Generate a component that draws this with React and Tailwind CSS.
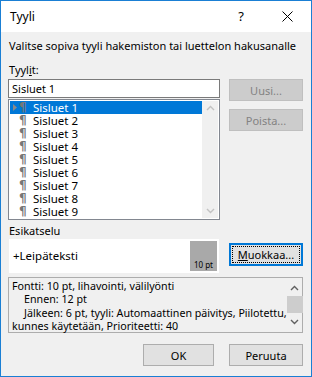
import React from "react";

const font = { fontFamily: '"Noto Sans", "Open Sans", sans-serif' };

function Chevron({ up, color }) {
  return (
    <svg width="9" height="6" viewBox="0 0 9 6" fill="none">
      <path
        d={up ? "M1 5 L4.5 1.5 L8 5" : "M1 1 L4.5 4.5 L8 1"}
        stroke={color}
        strokeWidth="1.4"
      />
    </svg>
  );
}

function Button({ children, disabled, focused, className = "" }) {
  if (focused) {
    return (
      <div className={`flex h-[23px] items-center justify-center border-2 border-[#0078d7] bg-[#e1e1e1] p-px ${className}`}>
        <div className="flex h-full w-full items-center justify-center border border-dotted border-black text-black">
          {children}
        </div>
      </div>
    );
  }
  return (
    <div
      className={`flex h-[22px] items-center justify-center border ${
        disabled ? "border-[#bfbfbf] bg-[#cccccc] text-[#838383]" : "border-[#adadad] bg-[#e1e1e1] text-black"
      } ${className}`}
    >
      {children}
    </div>
  );
}

const styles = ["Sisluet 1", "Sisluet 2", "Sisluet 3", "Sisluet 4", "Sisluet 5", "Sisluet 6", "Sisluet 7", "Sisluet 8", "Sisluet 9"];

export default function App() {
  return (
    <div style={font} className="flex h-[377px] w-[312px] flex-col border border-[#1a7fd4] bg-[#f0f0f0] text-[11px] leading-[15px] whitespace-nowrap text-black">
      {/* title bar */}
      <div className="flex h-[31px] items-center bg-white pl-[9px]">
        <span className="text-[12px]">Tyyli</span>
        <span className="ml-auto mr-[38px] text-[13px]">?</span>
        <svg className="mr-[18px]" width="11" height="11" viewBox="0 0 11 11">
          <path d="M0.5 0.5 L10.5 10.5 M10.5 0.5 L0.5 10.5" stroke="#000" strokeWidth="1" />
        </svg>
      </div>

      <div className="flex flex-1 flex-col px-[7px]">
        <div className="mt-[6px] pl-px">Valitse sopiva tyyli hakemiston tai luettelon hakusanalle</div>
        <div className="mt-[9px] pl-px">
          Tyyl<span className="underline">i</span>t:
        </div>

        <div className="mt-[2px] flex gap-[9px]">
          <div className="flex w-[212px] flex-col">
            <div className="flex h-[19px] items-center border border-[#7a7a7a] bg-white pl-[3px]">Sisluet 1</div>
            <div className="mt-px flex h-[121px] border border-[#828790] bg-white p-px">
              <div className="flex flex-1 flex-col">
                {styles.map((s, i) => (
                  <div
                    key={s}
                    className={`flex h-[13px] items-center overflow-hidden leading-[13px] ${i === 0 ? "bg-[#0078d7] text-white" : ""}`}
                  >
                    <span className="flex w-[7px] justify-end">
                      {i === 0 && (
                        <svg width="4" height="7" viewBox="0 0 4 7">
                          <path d="M0 0 L4 3.5 L0 7 Z" fill="#8a8a8a" />
                        </svg>
                      )}
                    </span>
                    <span
                      className="ml-[2px] flex h-[13px] w-[12px] items-center text-[12px] leading-[13px] font-bold text-[#777777]"
                      style={{ fontFamily: '"DejaVu Sans", sans-serif' }}
                    >
                      ¶
                    </span>
                    <span className="ml-[2px] text-[11.5px] leading-[13px]">{s}</span>
                  </div>
                ))}
              </div>
              <div className="flex w-[16px] flex-col items-center justify-between bg-[#f0f0f0] py-[4px]">
                <Chevron up color="#c2c2c2" />
                <Chevron color="#c2c2c2" />
              </div>
            </div>
            <div className="mt-[3px] pl-px">Esikatselu</div>
            <div className="mt-[1px] ml-[1px] flex h-[34px] w-[210px] bg-white p-[2px]">
              <div className="flex-1 pl-[2px] pt-[7px] text-[11.5px]">+Leipäteksti</div>
              <div className="flex w-[27px] items-end justify-center bg-[#a9a9a9] pb-[1px] text-[8px] leading-[10px]">10 pt</div>
            </div>
          </div>

          <div className="flex w-[74px] flex-col">
            <Button disabled>Uusi...</Button>
            <Button disabled className="mt-[8px]">Poista...</Button>
            <Button focused className="mt-[112px]">
              <span>
                <span className="underline">M</span>uokkaa...
              </span>
            </Button>
          </div>
        </div>

        <div className="mt-[4px] flex h-[56px] w-[295px] border border-[#adadad] bg-[#f0f0f0]">
          <div className="flex-1 pl-[3px] pt-[2px] text-[10.7px] leading-[13.3px]">
            <div>Fontti: 10 pt, lihavointi, välilyönti</div>
            <div className="pl-[12px]">Ennen: 12 pt</div>
            <div className="pl-[12px]">Jälkeen: 6 pt, tyyli: Automaattinen päivitys, Piilotettu,</div>
            <div>kunnes käytetään, Prioriteetti: 40</div>
          </div>
          <div className="flex w-[16px] flex-col items-center pt-[7px]">
            <Chevron up color="#606060" />
            <div className="mt-[5px] h-[17px] w-[16px] bg-[#cdcdcd]" />
            <div className="mt-[6px]">
              <Chevron color="#606060" />
            </div>
          </div>
        </div>

        <div className="mt-[11px] flex justify-end gap-[15px] pr-px">
          <Button className="w-[71px]">OK</Button>
          <Button className="w-[74px]">Peruuta</Button>
        </div>
      </div>
    </div>
  );
}
